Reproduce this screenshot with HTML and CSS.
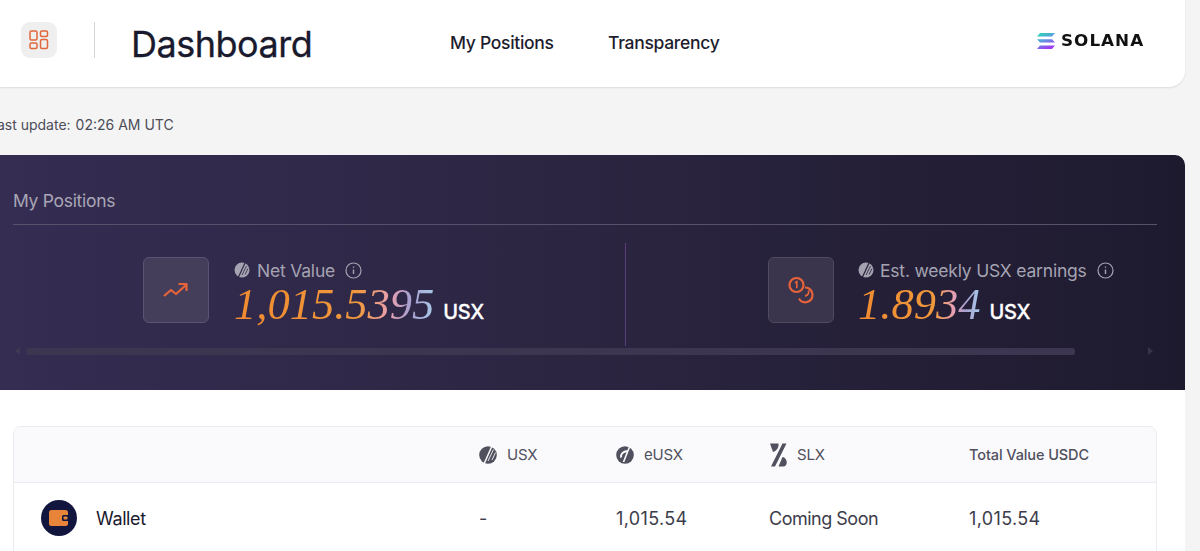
FILE: index.html
```html
<!DOCTYPE html>
<html lang="en">
<head>
<meta charset="utf-8">
<title>Dashboard</title>
<link rel="stylesheet" href="styles.css">
</head>
<body>
<div class="page">
  <header class="topbar">
    <div class="tile-app">
      <svg width="20" height="20" viewBox="0 0 20 20" fill="none" stroke="#e0683c" stroke-width="1.5"><rect x="1" y="1" width="7" height="9" rx="1.5"/><rect x="11.500" y="1" width="7" height="5.500" rx="1.500"/><rect x="1" y="13" width="7" height="5.500" rx="1.500"/><rect x="11.500" y="9.500" width="7" height="9" rx="1.500"/></svg>
    </div>
    <span class="vr"></span>
    <h1 class="title">Dashboard</h1>
    <nav class="nav"><a class="nav-a">My Positions</a><a class="nav-b">Transparency</a></nav>
    <div class="logo">
      <svg width="18" height="16" viewBox="0 0 18 16"><defs><linearGradient id="sol" x1="0" y1="0" x2="0.500" y2="1"><stop offset="0" stop-color="#27e0b0"/><stop offset="0.500" stop-color="#5a9be0"/><stop offset="1" stop-color="#a03cf0"/></linearGradient></defs><path fill="url(#sol)" d="M3 0h15l-3 3.500H0zM0 6.200h15l3 3.400H3zM3 12.400h15l-3 3.600H0z"/></svg>
      <span class="logo-text">SOLANA</span>
    </div>
  </header>

  <p class="update">Last update:<span class="update-val">02:26 AM UTC</span></p>

  <section class="hero">
    <h2 class="hero-title">My Positions</h2>
    <div class="stats">
      <div class="stat stat-a">
        <div class="stat-tile">
          <svg width="26" height="16" viewBox="0 0 26 16" fill="none" stroke="#e8633a" stroke-width="2.200" stroke-linejoin="round"><path d="M1 14l7-6 5 4 10-9"/><path d="M15.500 2h8v7"/></svg>
        </div>
        <div class="stat-body">
          <div class="stat-label">
            <svg class="coin" width="16" height="16" viewBox="0 0 16 16"><circle cx="8" cy="8" r="7.500" fill="#a5a3b2"/><path d="M11 1L4.500 15" stroke="#2f2946" stroke-width="1.200"/><path d="M12.500 4L8 13M14 6.500L11 12.500" stroke="#2f2946" stroke-width=".8"/></svg>
            <span>Net Value</span>
            <svg class="info" width="17" height="17" viewBox="0 0 17 17" fill="none" stroke="#a5a3b2"><circle cx="8.500" cy="8.500" r="7.500" stroke-width="1.200"/><path d="M8.500 7.500v4.500M8.500 4.500v1.300" stroke-width="1.400"/></svg>
          </div>
          <div class="stat-value"><span class="num num-long">1,015.5395</span><span class="unit">USX</span></div>
        </div>
      </div>
      <span class="col-rule"></span>
      <div class="stat stat-b">
        <div class="stat-tile">
          <svg width="26" height="28" viewBox="0 0 26 28" fill="none" stroke="#e8633a" stroke-width="2.200"><circle cx="8.500" cy="9" r="7"/><path d="M7 6.800l1.800-1v6.500" stroke-width="1.700"/><path d="M17 11.500a7.200 7.200 0 0 1 7.500 7.500a7.200 7.200 0 0 1-13.500 3.500"/><path d="M20.500 14.500c.8 2.500-.5 5-3.500 5.500" stroke-width="1.800"/></svg>
        </div>
        <div class="stat-body">
          <div class="stat-label">
            <svg class="coin" width="16" height="16" viewBox="0 0 16 16"><circle cx="8" cy="8" r="7.500" fill="#a5a3b2"/><path d="M11 1L4.500 15" stroke="#241f36" stroke-width="1.200"/><path d="M12.500 4L8 13M14 6.500L11 12.500" stroke="#241f36" stroke-width=".8"/></svg>
            <span>Est. weekly USX earnings</span>
            <svg class="info" width="17" height="17" viewBox="0 0 17 17" fill="none" stroke="#a5a3b2"><circle cx="8.500" cy="8.500" r="7.500" stroke-width="1.200"/><path d="M8.500 7.500v4.500M8.500 4.500v1.300" stroke-width="1.400"/></svg>
          </div>
          <div class="stat-value"><span class="num num-short">1.8934</span><span class="unit">USX</span></div>
        </div>
      </div>
    </div>
    <div class="scroll">
      <span class="arrow arrow-l"></span>
      <span class="track"></span>
      <span class="arrow arrow-r"></span>
    </div>
  </section>

  <section class="lower">
    <div class="table">
      <div class="row row-head">
        <div class="cell c1"></div>
        <div class="cell c2">
          <svg width="18" height="18" viewBox="0 0 18 18"><circle cx="9" cy="9" r="8.800" fill="#50505e"/><path d="M13 0L5 18" stroke="#fafafc" stroke-width="1.500"/><path d="M14.500 3.500L9 15M16.500 6.500L13 14" stroke="#fafafc" stroke-width=".9"/></svg>
          <span>USX</span>
        </div>
        <div class="cell c3">
          <svg width="18" height="18" viewBox="0 0 18 18"><circle cx="9" cy="9" r="8.800" fill="#50505e"/><path d="M13.500 1L7.500 16" stroke="#fafafc" stroke-width="1.600"/><path d="M5 11.500c-.5-3.500 2-6 6.500-6.500" fill="none" stroke="#fafafc" stroke-width="2"/></svg>
          <span>eUSX</span>
        </div>
        <div class="cell c4">
          <svg width="18" height="24" viewBox="0 0 18 24" fill="#50505e"><path d="M1 .5h8.500c.5 3.500-1.500 7.500-5.500 8.500zM13.500 .5h4L6 23.500H2zM9.500 23.500l4-9.500c3 .5 4.500 3.500 4.200 6-.2 2-1.500 3.500-3.200 3.500z"/></svg>
          <span>SLX</span>
        </div>
        <div class="cell c5 total">Total Value USDC</div>
      </div>
      <div class="row row-body">
        <div class="cell c1 wallet">
          <span class="wallet-badge">
            <svg width="20" height="17" viewBox="0 0 20 17"><rect x="0" y="0" width="19" height="16" rx="2.500" fill="#e8843a"/><rect x="13" y="5" width="7" height="6" rx="1.500" fill="#12163f"/><rect x="14.500" y="6.500" width="4" height="3" rx="1" fill="#e8843a"/></svg>
          </span>
          <span class="wallet-name">Wallet</span>
        </div>
        <div class="cell c2">-</div>
        <div class="cell c3 figure">1,015.54</div>
        <div class="cell c4 soon">Coming Soon</div>
        <div class="cell c5 figure">1,015.54</div>
      </div>
    </div>
  </section>
</div>
</body>
</html>
```
FILE: styles.css
```css
* { box-sizing: border-box; }
html, body { margin: 0; height: 551px; overflow: hidden; }
body { background: #f4f4f4; font-family: "Inter", "Liberation Sans", sans-serif; color: #1b1b2f; }
.page { width: 1185px; display: flex; flex-direction: column; }

.topbar { height: 87px; background: #fff; border-radius: 0 0 16px 0; box-shadow: 0 1px 2px rgba(0,0,0,.1); display: flex; align-items: center; padding-left: 21px; }
.tile-app { width: 36px; height: 36px; border-radius: 9px; background: #efefef; display: flex; align-items: center; justify-content: center; margin-top: -7px; }
.vr { width: 1px; height: 36px; background: #d4d4d4; margin: -7px 0 0 37px; }
.title { margin: 0 0 0 36px; font-size: 36px; line-height: 44px; font-weight: 400; color: #1a1a2e; width: 319px; letter-spacing: -.5px; -webkit-text-stroke: .3px #1a1a2e; }
.nav { display: flex; margin-top: -3px; font-size: 17.500px; font-weight: 500; color: #1d1d2e; letter-spacing: -.3px; }
.nav-a { width: 158px; }
.logo { margin: -6px 40px 0 auto; display: flex; align-items: center; gap: 6px; }
.logo-text { font-family: "DejaVu Sans", sans-serif; font-weight: 700; font-size: 15px; letter-spacing: .9px; color: #111; transform: scaleX(1.12); transform-origin: left; width: 84px; }

.update { margin: 29px 0 0 -11px; height: 18px; font-size: 14px; line-height: 18px; color: #4c4c58; white-space: nowrap; }
.update-val { margin-left: 5px; }

.hero { margin-top: 21px; height: 235px; border-radius: 0 10px 0 0; background: linear-gradient(90deg, #352d52 0%, #2b2541 50%, #1e1a2e 100%); padding: 34px 28px 0 13px; position: relative; }
.hero-title { margin: 0; height: 36px; font-size: 17.500px; line-height: 24px; font-weight: 400; color: #a9a6b6; letter-spacing: -.3px; border-bottom: 1px solid #57516b; }
.stats { display: flex; margin-top: 18px; height: 103px; }
.stat { display: flex; padding-top: 14px; }
.stat-a { width: 612px; padding-left: 130px; }
.stat-b { padding-left: 142px; }
.col-rule { width: 1px; height: 103px; background: #5a3a78; }
.stat-tile { width: 66px; height: 66px; flex: none; border-radius: 6px; background: #453e5b; border: 1px solid #5a5470; display: flex; align-items: center; justify-content: center; }
.stat-b .stat-tile { background: #3a344c; border-color: #4f4a60; }
.stat-body { margin-left: 25px; }
.stat-b .stat-body { margin-left: 24px; }
.stat-label { display: flex; align-items: center; height: 20px; margin-top: 3px; font-size: 17.500px; color: #a5a3b2; letter-spacing: -.2px; white-space: nowrap; }
.coin { margin-right: 7px; }
.info { margin-left: 10px; }
.stat-b .stat-label .coin { margin-right: 6px; }
.stat-value { display: flex; align-items: baseline; margin-top: 1px; white-space: nowrap; }
.num { font-family: "Liberation Serif", serif; font-style: italic; font-size: 44.500px; line-height: 46px; -webkit-background-clip: text; background-clip: text; color: transparent; background-image: linear-gradient(90deg, #f08a30 0%, #f0983c 62%, #e8a0b0 78%, #a8a0d0 88%, #a8c8e8 100%); }
.unit { margin-left: 9px; font-size: 20px; font-weight: 500; color: #fff; -webkit-text-stroke: .3px #fff; letter-spacing: -.2px; }

.scroll { display: flex; align-items: center; height: 8px; margin-top: 1px; position: relative; }
.track { position: absolute; left: 13px; width: 1049px; height: 7px; border-radius: 3px; background: #3c3650; }
.arrow { position: absolute; width: 0; height: 0; border-top: 4px solid transparent; border-bottom: 4px solid transparent; }
.arrow-l { left: 2px; border-right: 5px solid #3f3955; }
.arrow-r { left: 1135px; border-left: 5px solid #38334a; }

.lower { background: #fff; height: 161px; padding: 37px 28px 0 13px; }
.table { border: 1px solid #ececf0; border-radius: 8px; height: 140px; margin-top: -1px; }
.row { display: flex; align-items: center; }
.row-head { height: 56px; background: #fafafc; border-bottom: 1px solid #ececf0; border-radius: 8px 8px 0 0; font-size: 15px; color: #50505e; letter-spacing: -.2px; }
.row-body { height: 70px; font-size: 18px; color: #3c3c4a; letter-spacing: -.2px; }
.cell { display: flex; align-items: center; gap: 10px; }
.c1 { width: 465px; }
.c2 { width: 137px; }
.c3 { width: 153px; }
.c4 { width: 200px; }
.figure { letter-spacing: .35px; }
.soon { letter-spacing: -.5px; }
.total { font-size: 14.500px; font-weight: 500; letter-spacing: -.1px; }
.wallet { padding-left: 27px; gap: 19px; color: #1a1a2e; }
.wallet-badge { width: 36px; height: 36px; border-radius: 50%; background: #12163f; display: flex; align-items: center; justify-content: center; }
.wallet-name { font-size: 18px; letter-spacing: -.4px; }
```
